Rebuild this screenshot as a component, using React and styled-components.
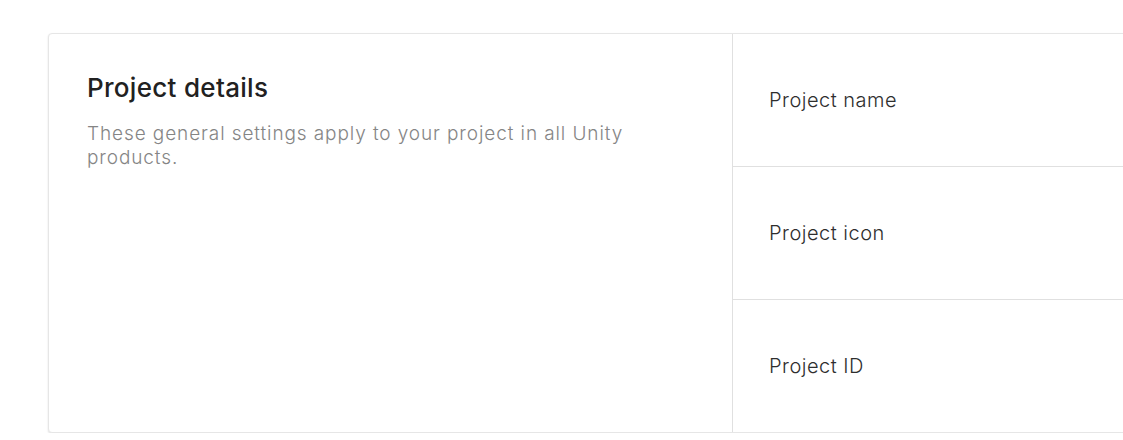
import React from 'react'
import styled, { createGlobalStyle } from 'styled-components'

const GlobalStyle = createGlobalStyle`
  html, body {
    margin: 0;
    padding: 0;
    background: #ffffff;
    overflow: hidden;
  }
  body {
    font-family: Inter, "Noto Sans", "Liberation Sans", sans-serif;
    color: #212121;
  }
`

let Page = styled.div`
  padding: 33px 0 0 48px;
  width: 1600px;
`

let Card = styled.section`
  display: grid;
  grid-template-columns: 684px 1fr;
  width: 1200px;
  background: #fff;
  border: 1px solid #e6e6e6;
  border-radius: 4px;
  box-shadow: 0 1px 2px rgba(0, 0, 0, 0.12);
`

let Intro = styled.div`
  padding: 38px 38px;
  border-right: 1px solid #e0e0e0;
`

let Title = styled.h2`
  margin: 0 0 18px;
  font-size: 26px;
  line-height: 32px;
  font-weight: 500;
  letter-spacing: 0.3px;
  color: #212121;
`

let Description = styled.p`
  margin: 0;
  font-size: 19px;
  line-height: 24px;
  font-weight: 300;
  letter-spacing: 0.9px;
  color: #858585;
`

let Fields = styled.div`
  display: flex;
  flex-direction: column;
`

let FieldRow = styled.div`
  display: flex;
  align-items: center;
  height: 132px;
  padding: 0 36px;
  border-top: ${p => (p.$first ? 'none' : '1px solid #e0e0e0')};
  font-size: 20px;
  font-weight: 300;
  letter-spacing: 0.5px;
  color: #2e2e2e;
`

const fields = ['Project name', 'Project icon', 'Project ID']

export default function App() {
  return (
    <Page>
      <GlobalStyle />
      <Card>
        <Intro>
          <Title>Project details</Title>
          <Description>
            These general settings apply to your project in all Unity products.
          </Description>
        </Intro>
        <Fields>
          {fields.map((f, i) => (
            <FieldRow key={f} $first={i === 0}>{f}</FieldRow>
          ))}
        </Fields>
      </Card>
    </Page>
  )
}
